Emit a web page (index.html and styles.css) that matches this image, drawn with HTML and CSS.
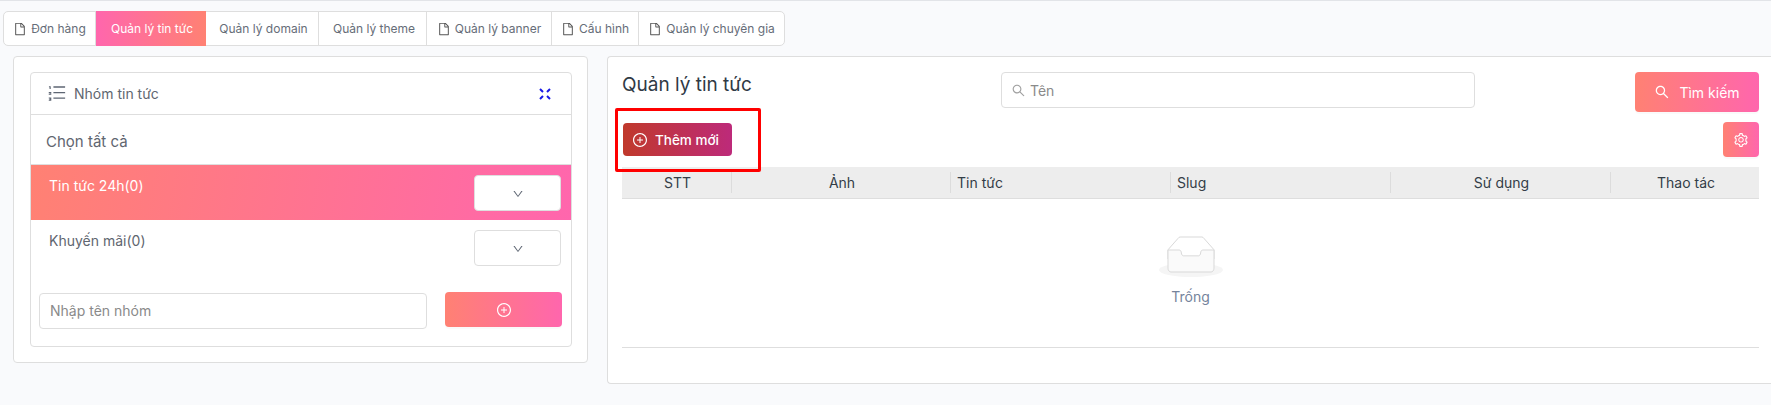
FILE: index.html
```html
<!DOCTYPE html>
<html lang="vi">
<head>
    <meta charset="UTF-8">
    <meta name="viewport" content="width=device-width, initial-scale=1.0">
    <title>Quản lý tin tức</title>
    <link rel="stylesheet" href="styles.css">
</head>
<body>
    <svg class="icon-defs" width="0" height="0">
        <symbol id="i-file" viewBox="0 0 1024 1024"><path d="M854.6 288.6L639.4 73.4c-6-6-14.1-9.4-22.6-9.4H192c-17.7 0-32 14.3-32 32v832c0 17.7 14.3 32 32 32h640c17.7 0 32-14.3 32-32V311.3c0-8.5-3.4-16.7-9.4-22.7zM790.2 326H602V137.8L790.2 326zm1.8 562H232V136h302v216a42 42 0 0042 42h216v494z"/></symbol>
        <symbol id="i-search" viewBox="0 0 1024 1024"><path d="M909.6 854.5L649.9 594.8C690.2 542.7 712 479 712 412c0-80.2-31.3-155.4-87.9-212.1-56.6-56.7-132-87.9-212.1-87.9s-155.5 31.3-212.1 87.9C143.2 256.5 112 331.8 112 412c0 80.1 31.3 155.5 87.9 212.1C256.5 680.8 331.8 712 412 712c67 0 130.6-21.8 182.7-62l259.7 259.6a8.2 8.2 0 0011.6 0l43.6-43.5a8.2 8.2 0 000-11.6zM570.4 570.4C528 612.7 471.8 636 412 636s-116-23.3-158.4-65.6C211.3 528 188 471.8 188 412s23.3-116.1 65.6-158.4C296 211.3 352.2 188 412 188s116.1 23.2 158.4 65.6S636 352.2 636 412s-23.3 116.1-65.6 158.4z"/></symbol>
        <symbol id="i-plus" viewBox="0 0 1024 1024"><path d="M696 480H544V328c0-4.4-3.6-8-8-8h-48c-4.4 0-8 3.6-8 8v152H328c-4.4 0-8 3.6-8 8v48c0 4.4 3.6 8 8 8h152v152c0 4.4 3.6 8 8 8h48c4.4 0 8-3.6 8-8V544h152c4.4 0 8-3.6 8-8v-48c0-4.4-3.6-8-8-8z"/><path d="M512 64C264.6 64 64 264.6 64 512s200.6 448 448 448 448-200.6 448-448S759.4 64 512 64zm0 820c-205.4 0-372-166.6-372-372s166.6-372 372-372 372 166.6 372 372-166.6 372-372 372z"/></symbol>
        <symbol id="i-down" viewBox="0 0 1024 1024"><path d="M884 256h-75c-5.1 0-9.9 2.5-12.9 6.6L512 654.2 227.9 262.6c-3-4.1-7.8-6.6-12.9-6.6h-75c-6.5 0-10.3 7.4-6.5 12.7l352.6 486.1c12.8 17.6 39 17.6 51.7 0l352.6-486.1c3.9-5.3.1-12.7-6.4-12.7z"/></symbol>
    </svg>

    <div class="tabs">
        <a class="tab"><svg class="ic"><use href="#i-file"/></svg>Đơn hàng</a>
        <a class="tab active">Quản lý tin tức</a>
        <a class="tab">Quản lý domain</a>
        <a class="tab">Quản lý theme</a>
        <a class="tab"><svg class="ic"><use href="#i-file"/></svg>Quản lý banner</a>
        <a class="tab"><svg class="ic"><use href="#i-file"/></svg>Cấu hình</a>
        <a class="tab"><svg class="ic"><use href="#i-file"/></svg>Quản lý chuyên gia</a>
    </div>

    <div class="main">
        <div class="panel panel-left">
            <div class="group-card">
                <div class="group-head">
                    <div class="group-title">
                        <svg class="ic-list" viewBox="0 0 1024 1024"><path d="M920 760H336c-4.4 0-8-3.6-8-8v-56c0-4.4 3.6-8 8-8h584c4.4 0 8 3.6 8 8v56c0 4.4-3.6 8-8 8zm0-568H336c-4.4 0-8-3.6-8-8v-56c0-4.4 3.6-8 8-8h584c4.4 0 8 3.6 8 8v56c0 4.4-3.6 8-8 8zm0 284H336c-4.4 0-8-3.6-8-8v-56c0-4.4 3.6-8 8-8h584c4.4 0 8 3.6 8 8v56c0 4.4-3.6 8-8 8z"/><path d="M100 120h90v130h-60v-80h-30zM90 410h130v60h-70v20h70v60H90v-70h70v-15H90zM90 690h130v170H90v-50h70v-12H110v-46h50v-12H90z"/></svg>
                        <span>Nhóm tin tức</span>
                    </div>
                    <svg class="ic-expand" viewBox="0 0 12 12"><path d="M1 1l3 3M11 1L8 4M1 11l3-3M11 11L8 8"/></svg>
                </div>
                <div class="select-all">Chọn tất cả</div>
                <div class="group-row selected">
                    <span>Tin tức 24h(0)</span>
                    <button class="drop-btn"><svg class="ic-sm"><use href="#i-down"/></svg></button>
                </div>
                <div class="group-row">
                    <span>Khuyến mãi(0)</span>
                    <button class="drop-btn"><svg class="ic-sm"><use href="#i-down"/></svg></button>
                </div>
                <div class="group-add">
                    <input class="group-input" type="text" placeholder="Nhập tên nhóm">
                    <button class="btn-add"><svg class="ic-btn"><use href="#i-plus"/></svg></button>
                </div>
            </div>
        </div>

        <div class="panel panel-right">
            <div class="top-row">
                <h1 class="page-title">Quản lý tin tức</h1>
                <div class="search-box">
                    <svg class="ic-search"><use href="#i-search"/></svg>
                    <input type="text" placeholder="Tên">
                </div>
                <button class="btn-search"><svg class="ic-btn"><use href="#i-search"/></svg>Tìm kiếm</button>
            </div>
            <div class="action-row">
                <button class="btn-new"><svg class="ic-btn"><use href="#i-plus"/></svg>Thêm mới</button>
                <button class="btn-gear">
                    <svg class="ic-btn" viewBox="0 0 1024 1024"><path d="M924.8 625.7l-65.5-56c3.1-19 4.7-38.4 4.7-57.8s-1.6-38.8-4.7-57.8l65.5-56a32.03 32.03 0 009.3-35.2l-.9-2.6a443.74 443.74 0 00-79.7-137.9l-1.8-2.1a32.12 32.12 0 00-35.1-9.5l-81.3 28.9c-30-24.6-63.5-44-99.7-57.6l-15.7-85a32.05 32.05 0 00-25.8-25.7l-2.7-.5c-52.1-9.4-106.9-9.4-159 0l-2.7.5a32.05 32.05 0 00-25.8 25.7l-15.8 85.4a351.86 351.86 0 00-99 57.4l-81.9-29.1a32 32 0 00-35.1 9.5l-1.8 2.1a446.02 446.02 0 00-79.7 137.9l-.9 2.6c-4.5 12.5-.8 26.5 9.3 35.2l66.3 56.6c-3.1 18.8-4.6 38-4.6 57.1 0 19.2 1.5 38.4 4.6 57.1L99 625.5a32.03 32.03 0 00-9.3 35.2l.9 2.6c18.1 50.4 44.9 96.9 79.7 137.9l1.8 2.1a32.12 32.12 0 0035.1 9.5l81.9-29.1c29.8 24.5 63.1 43.9 99 57.4l15.8 85.4a32.05 32.05 0 0025.8 25.7l2.7.5a449.4 449.4 0 00159 0l2.7-.5a32.05 32.05 0 0025.8-25.7l15.7-85a350 350 0 0099.7-57.6l81.3 28.9a32 32 0 0035.1-9.5l1.8-2.1c34.8-41.1 61.6-87.5 79.7-137.9l.9-2.6c4.5-12.3.8-26.3-9.3-35zM788.3 465.9c2.5 15.1 3.8 30.6 3.8 46.1s-1.3 31-3.8 46.1l-6.6 40.1 74.7 63.9a370.03 370.03 0 01-42.6 73.6L721 702.8l-31.4 25.8c-23.9 19.6-50.5 35-79.3 45.8l-38.1 14.3-17.9 97a377.5 377.5 0 01-85 0l-17.9-97.2-37.8-14.5c-28.5-10.8-55-26.2-78.7-45.7l-31.4-25.9-93.4 33.2c-17-22.9-31.2-47.6-42.6-73.6l75.5-64.5-6.5-40c-2.4-14.9-3.7-30.3-3.7-45.5 0-15.3 1.2-30.6 3.7-45.5l6.5-40-75.5-64.5c11.3-26.1 25.6-50.7 42.6-73.6l93.4 33.2 31.4-25.9c23.7-19.5 50.2-34.9 78.7-45.7l37.9-14.3 17.9-97.2c28.1-3.2 56.8-3.2 85 0l17.9 97 38.1 14.3c28.7 10.8 55.4 26.2 79.3 45.8l31.4 25.8 92.8-32.9c17 22.9 31.2 47.6 42.6 73.6L781.8 426l6.5 39.9zM512 326c-97.2 0-176 78.8-176 176s78.8 176 176 176 176-78.8 176-176-78.8-176-176-176zm79.2 255.2A111.6 111.6 0 01512 614c-29.9 0-58-11.7-79.2-32.8A111.6 111.6 0 01400 502c0-29.9 11.7-58 32.8-79.2C454 401.6 482.1 390 512 390c29.9 0 58 11.6 79.2 32.8A111.6 111.6 0 01624 502c0 29.9-11.7 58-32.8 79.2z"/></svg>
                </button>
                <div class="red-box"></div>
            </div>
            <div class="news-table">
                <div class="table-head">
                    <div class="th th-center">STT</div>
                    <div class="th th-center">Ảnh</div>
                    <div class="th">Tin tức</div>
                    <div class="th">Slug</div>
                    <div class="th th-center">Sử dụng</div>
                    <div class="th th-center">Thao tác</div>
                </div>
                <div class="empty">
                    <svg width="64" height="41" viewBox="0 0 64 41"><g transform="translate(0 1)" fill="none" fill-rule="evenodd"><ellipse fill="#f5f5f5" cx="32" cy="33" rx="32" ry="7"/><g fill-rule="nonzero" stroke="#d9d9d9"><path d="M55 12.76L44.854 1.258C44.367.474 43.656 0 42.907 0H21.093c-.749 0-1.46.474-1.947 1.257L9 12.761V22h46v-9.24z"/><path d="M41.613 15.931c0-1.605.994-2.93 2.227-2.931H55v18.137C55 33.26 53.68 35 52.05 35h-40.1C10.32 35 9 33.259 9 31.137V13h11.16c1.233 0 2.227 1.323 2.227 2.928v.022c0 1.605 1.005 2.901 2.237 2.901h14.752c1.232 0 2.237-1.308 2.237-2.913v-.007z" fill="#fafafa"/></g></g></svg>
                    <div class="empty-text">Trống</div>
                </div>
            </div>
        </div>
    </div>
</body>
</html>
```

FILE: styles.css
```css
:root {
    --pink: #ff66ad;
    --coral: #ff8173;
    --line: #dedede;
    --text: #5f6670;
}

* {
    box-sizing: border-box;
}

html, body {
    height: 100%;
}

body {
    margin: 0;
    padding: 11px 12px 0 3px;
    overflow: hidden;
    background: #f9fafc;
    border-top: 1px solid #e2e4e8;
    font-family: Inter, "Noto Sans", sans-serif;
    color: var(--text);
}

.icon-defs {
    display: none;
}

button {
    font-family: inherit;
    cursor: pointer;
}

svg {
    fill: currentColor;
}

.tabs {
    display: inline-flex;
    height: 35px;
    margin-top: -1px;
    background: #fff;
    border: 1px solid var(--line);
    border-radius: 5px;
    vertical-align: top;
}

.tab {
    display: flex;
    align-items: center;
    justify-content: center;
    gap: 4px;
    font-size: 12px;
    color: #666d78;
    border-right: 1px solid var(--line);
    white-space: nowrap;
}

.tab .ic {
    color: #555;
}

/* widths measured off the design */
.tab:nth-child(1) { width: 92px; }
.tab:nth-child(3) { width: 113px; padding-left: 3px; }
.tab:nth-child(4) { width: 108px; padding-left: 3px; }
.tab:nth-child(5) { width: 125px; }
.tab:nth-child(6) { width: 87px; }
.tab:nth-child(7) { width: 145px; border-right: none; }

.tab.active {
    width: 110px;
    margin: -1px 0;
    padding-left: 2px;
    color: #fff;
    border-right: none;
    background: linear-gradient(90deg, var(--pink), var(--coral));
}

.ic {
    width: 14px;
    height: 14px;
}

.main {
    display: flex;
    gap: 19px;
    margin: 10px -12px 0 10px;
}

.panel {
    background: #fff;
    border: 1px solid var(--line);
    border-radius: 4px;
}

.panel-left {
    flex: none;
    width: 575px;
    height: 307px;
    padding: 15px 15px 15px 16px;
}

.panel-right {
    position: relative;
    flex: 1;
    height: 328px;
    padding: 15px 12px 0 14px;
    border-right: none;
    border-top-right-radius: 0;
    border-bottom-right-radius: 0;
}

.group-card {
    height: 275px;
    border: 1px solid var(--line);
    border-radius: 4px;
}

.group-head {
    display: flex;
    align-items: center;
    justify-content: space-between;
    height: 42px;
    padding: 0 20px 0 16px;
    border-bottom: 1px solid var(--line);
}

.group-title {
    display: flex;
    align-items: center;
    gap: 7px;
    font-size: 14px;
}

.ic-list {
    width: 20px;
    height: 20px;
    color: #5e6673;
}

.ic-expand {
    width: 12px;
    height: 12px;
    fill: none;
    stroke: #1a1ae6;
    stroke-width: 2;
}

.select-all {
    height: 50px;
    padding: 0 15px;
    line-height: 54px;
    font-size: 15px;
    border-bottom: 1px solid var(--line);
}

.group-row {
    display: flex;
    justify-content: space-between;
    height: 55px;
    padding: 10px 10px 0 18px;
    font-size: 14px;
    line-height: 22px;
}

.group-row.selected {
    color: #fff;
    background: linear-gradient(100deg, var(--coral), var(--pink));
}

.drop-btn {
    width: 87px;
    height: 36px;
    background: #fff;
    border: 1px solid var(--line);
    border-radius: 4px;
    color: #5e6673;
}

.ic-sm {
    display: block;
    width: 12px;
    height: 12px;
    margin: 2px auto 0;
}

.group-add {
    display: flex;
    justify-content: space-between;
    padding: 17px 9px 0 8px;
}

.group-input {
    width: 388px;
    height: 36px;
    padding: 0 10px 1px;
    margin-top: 1px;
    border: 1px solid var(--line);
    border-radius: 4px;
    font-family: inherit;
    font-size: 14px;
}

.group-input::placeholder, .search-box input::placeholder {
    color: #8a8a8a;
}

.btn-add, .btn-search, .btn-gear {
    border: none;
    border-radius: 4px;
    color: #fff;
    background: linear-gradient(90deg, var(--coral), var(--pink));
    box-shadow: 0 2px 0 rgba(0, 0, 0, 0.02);
}

.btn-add {
    display: flex;
    align-items: center;
    justify-content: center;
    width: 117px;
    height: 35px;
}

.ic-btn {
    display: block;
    width: 16px;
    height: 16px;
}

.top-row {
    display: flex;
    align-items: flex-start;
    height: 50px;
}

.page-title {
    width: 379px;
    margin: 0;
    font-size: 19px;
    font-weight: 400;
    line-height: 26px;
    color: #2f3a45;
}

.search-box {
    display: flex;
    align-items: center;
    gap: 4px;
    width: 474px;
    height: 36px;
    padding: 0 9px;
    border: 1px solid var(--line);
    border-radius: 4px;
}

.ic-search {
    width: 15px;
    height: 15px;
    color: #a0a0a0;
}

.search-box input {
    flex: 1;
    border: none;
    outline: none;
    padding: 0;
    font-family: inherit;
    font-size: 14px;
}

.btn-search {
    display: flex;
    align-items: center;
    justify-content: center;
    gap: 9px;
    width: 124px;
    height: 40px;
    margin-left: auto;
    font-size: 14px;
}

.action-row {
    position: relative;
    display: flex;
    align-items: flex-start;
    justify-content: space-between;
    height: 45px;
}

.btn-new {
    display: flex;
    align-items: center;
    gap: 7px;
    width: 109px;
    height: 33px;
    padding: 0 9px;
    margin: 1px 0 0 1px;
    border: none;
    border-radius: 4px;
    color: #fff;
    font-size: 13.5px;
    font-weight: 500;
    background: linear-gradient(90deg, #c0392b, #bd2a7a);
}

.btn-gear {
    display: flex;
    align-items: center;
    justify-content: center;
    width: 36px;
    height: 35px;
}

.red-box {
    position: absolute;
    left: -7px;
    top: -14px;
    width: 146px;
    height: 64px;
    border: 3px solid #f00;
    border-radius: 2px;
    pointer-events: none;
}

.news-table {
    height: 181px;
    border-bottom: 1px solid var(--line);
}

.table-head {
    display: grid;
    grid-template-columns: 110px 219px 220px 220px 220px 1fr;
    height: 32px;
    background: #ededed;
    border-bottom: 1px solid var(--line);
    font-size: 14px;
    color: #333d47;
}

.th {
    display: flex;
    align-items: center;
    margin: 5px 0;
    padding-left: 6px;
    border-right: 1px solid #dcdcdc;
}

.th:last-child {
    border-right: none;
}

.th-center {
    justify-content: center;
    padding-left: 2px;
}

.empty {
    display: flex;
    flex-direction: column;
    align-items: center;
    padding-top: 37px;
}

.empty-text {
    margin-top: 11px;
    font-size: 14px;
    color: #75849c;
}
```
